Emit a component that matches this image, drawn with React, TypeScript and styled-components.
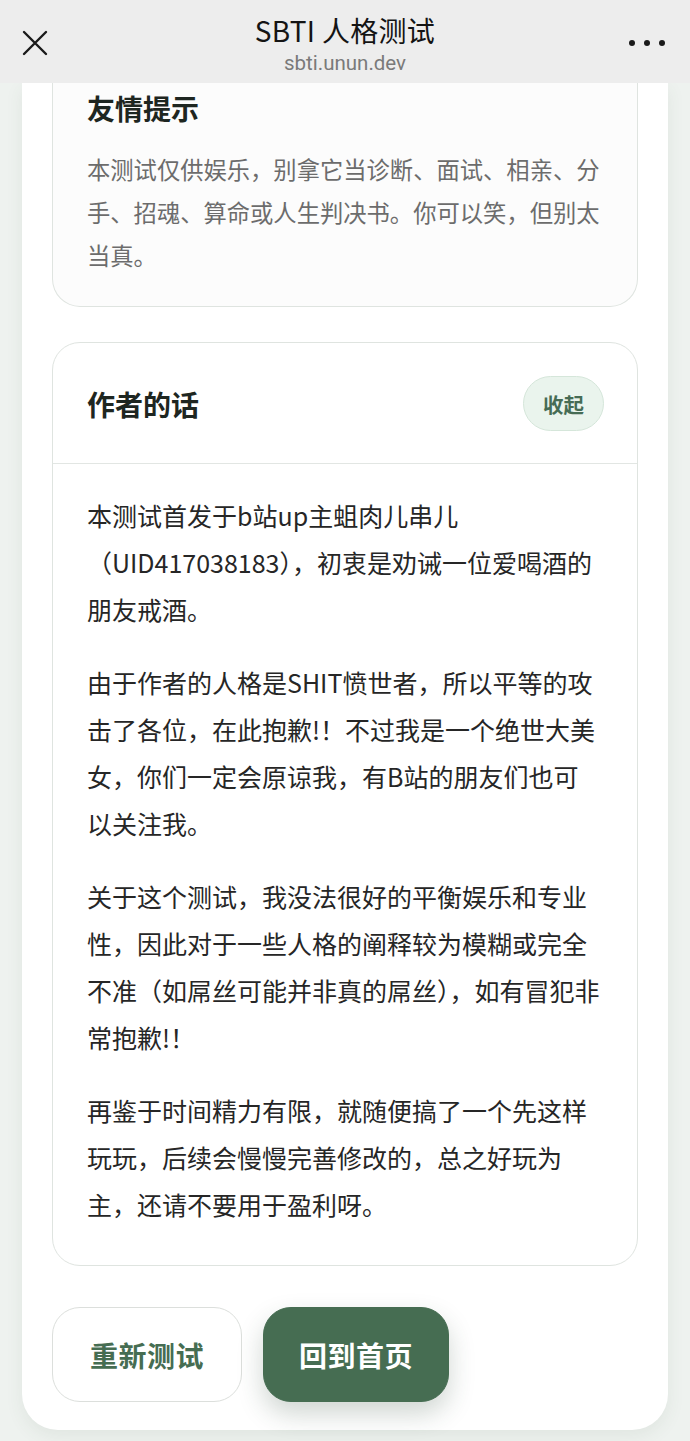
import React from "react";
import styled, { createGlobalStyle } from "styled-components";

const GlobalStyle = createGlobalStyle`
  html, body {
    margin: 0;
    padding: 0;
    background: #eef2ef;
  }
  body {
    font-family: "Noto Sans CJK SC", "Noto Sans", sans-serif;
    -webkit-font-smoothing: antialiased;
  }
  * {
    box-sizing: border-box;
  }
`;

const Screen = styled.div`
  width: 690px;
  height: 1441px;
  overflow: hidden;
  display: flex;
  flex-direction: column;
  background: #eef2ef;
`;

const NavBar = styled.header`
  height: 83px;
  flex-shrink: 0;
  background: #ededed;
  display: grid;
  grid-template-columns: 90px 1fr 90px;
  align-items: center;
  position: relative;
  z-index: 2;
`;

const NavButton = styled.button<{ side: "left" | "right" }>`
  border: none;
  background: none;
  padding: 0;
  display: flex;
  justify-content: ${(p) => (p.side === "left" ? "flex-start" : "flex-end")};
  padding-left: ${(p) => (p.side === "left" ? "21px" : "0")};
  padding-right: ${(p) => (p.side === "right" ? "24px" : "0")};
  padding-top: 2px;
  color: #1a1a1a;
`;

const NavTitle = styled.div`
  display: flex;
  flex-direction: column;
  align-items: center;
  padding-top: 4px;
`;

const PageName = styled.div`
  font-size: 28px;
  line-height: 34px;
  color: #141414;
  letter-spacing: 0.3px;
`;

const PageHost = styled.div`
  font-family: Roboto, "Noto Sans", sans-serif;
  font-size: 20.5px;
  line-height: 24px;
  color: #7a7a7a;
  margin-top: 4px;
`;

const Sheet = styled.main`
  margin: 0 22px;
  background: #ffffff;
  border-radius: 0 0 36px 36px;
  box-shadow: 0 6px 18px rgba(60, 90, 70, 0.08);
  padding: 0 30px 28px;
  display: flex;
  flex-direction: column;
  gap: 35px;
`;

const Card = styled.section<{ clipped?: boolean }>`
  border: 1px solid #dfe4e0;
  border-top: ${(p) => (p.clipped ? "none" : "1px solid #dfe4e0")};
  border-radius: ${(p) => (p.clipped ? "0 0 28px 28px" : "28px")};
  background: ${(p) => (p.clipped ? "#fcfcfc" : "#ffffff")};
`;

const TipBody = styled.div`
  padding: 7px 34px 29px;
`;

const CardTitle = styled.h2`
  margin: 0;
  font-size: 28px;
  line-height: 36px;
  font-weight: 700;
  color: #1e2621;
`;

const TipText = styled.p`
  margin: 22px 0 0;
  font-size: 23.3px;
  line-height: 43px;
  color: #6c6c6c;
`;

const CardHead = styled.div`
  display: flex;
  align-items: center;
  justify-content: space-between;
  padding: 33px 33px 32px 34px;
  border-bottom: 1px solid #e2e6e3;
`;

const PillButton = styled.button`
  height: 55px;
  padding: 0 19px;
  border-radius: 28px;
  border: 1px solid #d5e6da;
  background: #eaf4ed;
  color: #476c55;
  font-family: inherit;
  font-size: 20.5px;
  font-weight: 700;
`;

const CardBody = styled.div`
  padding: 28px 36px 11px 34px;
`;

const Para = styled.p`
  margin: 0 0 26px;
  font-size: 25px;
  line-height: 47px;
  color: #262626;
  text-spacing-trim: normal;
`;

const Actions = styled.div`
  display: flex;
  gap: 21px;
  padding-top: 6px;
`;

const ActionButton = styled.button<{ primary?: boolean }>`
  height: 95px;
  padding: 0 ${(p) => (p.primary ? "35px" : "37px")};
  border-radius: 28px;
  font-family: inherit;
  font-size: 28px;
  font-weight: 700;
  letter-spacing: 0.5px;
  border: 1px solid ${(p) => (p.primary ? "#466d52" : "#dcdfdc")};
  background: ${(p) => (p.primary ? "#466d52" : "#ffffff")};
  color: ${(p) => (p.primary ? "#ffffff" : "#466d52")};
  box-shadow: ${(p) =>
    p.primary ? "0 12px 26px rgba(40, 70, 50, 0.22)" : "none"};
`;

const CloseIcon = () => (
  <svg width="28" height="28" viewBox="0 0 28 28" fill="none">
    <path
      d="M3 3L25 25M25 3L3 25"
      stroke="currentColor"
      strokeWidth="2.4"
      strokeLinecap="round"
    />
  </svg>
);

const MoreIcon = () => (
  <svg width="38" height="10" viewBox="0 0 38 10" fill="currentColor">
    <circle cx="4" cy="5" r="3" />
    <circle cx="19" cy="5" r="3" />
    <circle cx="34" cy="5" r="3" />
  </svg>
);

const paragraphs = [
  "本测试首发于b站up主蛆肉儿串儿（UID417038183），初衷是劝诫一位爱喝酒的朋友戒酒。",
  "由于作者的人格是SHIT愤世者，所以平等的攻击了各位，在此抱歉!！不过我是一个绝世大美女，你们一定会原谅我，有B站的朋友们也可以关注我。",
  "关于这个测试，我没法很好的平衡娱乐和专业性，因此对于一些人格的阐释较为模糊或完全不准（如屌丝可能并非真的屌丝），如有冒犯非常抱歉!！",
  "再鉴于时间精力有限，就随便搞了一个先这样玩玩，后续会慢慢完善修改的，总之好玩为主，还请不要用于盈利呀。",
];

export default function App() {
  return (
    <>
      <GlobalStyle />
      <Screen>
        <NavBar>
          <NavButton side="left" aria-label="关闭">
            <CloseIcon />
          </NavButton>
          <NavTitle>
            <PageName>SBTI 人格测试</PageName>
            <PageHost>sbti.unun.dev</PageHost>
          </NavTitle>
          <NavButton side="right" aria-label="更多">
            <MoreIcon />
          </NavButton>
        </NavBar>

        <Sheet>
          <Card clipped>
            <TipBody>
              <CardTitle>友情提示</CardTitle>
              <TipText>
                本测试仅供娱乐，别拿它当诊断、面试、相亲、分手、招魂、算命或人生判决书。你可以笑，但别太当真。
              </TipText>
            </TipBody>
          </Card>

          <Card>
            <CardHead>
              <CardTitle>作者的话</CardTitle>
              <PillButton>收起</PillButton>
            </CardHead>
            <CardBody>
              {paragraphs.map((text, i) => (
                <Para key={i}>{text}</Para>
              ))}
            </CardBody>
          </Card>

          <Actions>
            <ActionButton>重新测试</ActionButton>
            <ActionButton primary>回到首页</ActionButton>
          </Actions>
        </Sheet>
      </Screen>
    </>
  );
}
